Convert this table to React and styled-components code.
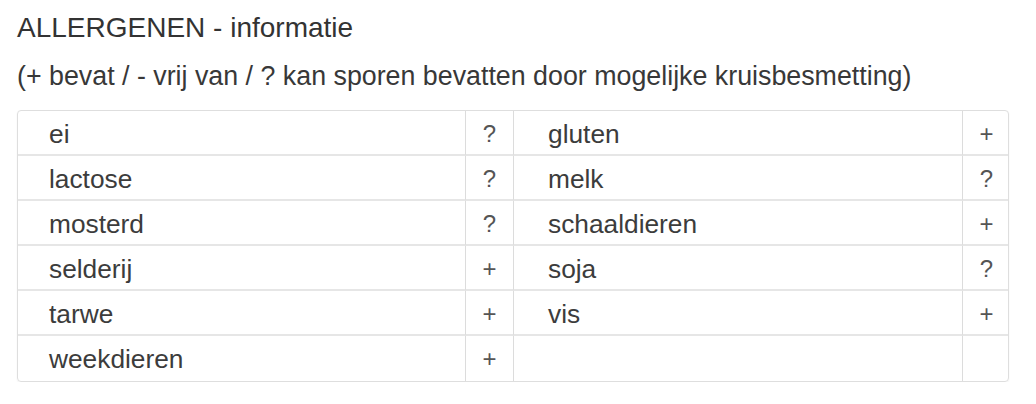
import styled, { createGlobalStyle } from "styled-components";

const GlobalStyle = createGlobalStyle`
  html, body {
    margin: 0;
    padding: 0;
    background: #fff;
  }
  body {
    font-family: "Liberation Sans", Arial, Helvetica, sans-serif;
    color: #333;
  }
`;

// 전체 래퍼
const Page = styled.div`
  width: 1036px;
  padding: 12px 0 0 17px;
  box-sizing: border-box;
`;

const Title = styled.h1`
  margin: 0;
  font-size: 28px;
  line-height: 32px;
  font-weight: normal;
  color: #333;
`;

const Legend = styled.p`
  margin: 17px 0 0 0;
  font-size: 26.8px;
  line-height: 30px;
  color: #383838;
`;

// 알레르겐 표
const Table = styled.div`
  margin-top: 19px;
  width: 992px;
  display: grid;
  grid-template-columns: 448px 48px 449px 47px;
  border: 1px solid #dedede;
  border-radius: 4px;
  box-sizing: border-box;
  overflow: hidden;
  box-shadow: 0 1px 2px rgba(0, 0, 0, 0.05);
`;

const Cell = styled.div`
  height: 45px;
  padding-top: 3px;
  box-sizing: border-box;
  border-bottom: ${(p) => (p.$last ? "none" : "2px solid #e6e6e6")};
  border-right: ${(p) => (p.$end ? "none" : "1px solid #dcdcdc")};
  font-size: 26.3px;
  line-height: 40px;
  color: #3c3c3c;
  white-space: nowrap;
`;

const NameCell = styled(Cell)`
  padding-left: ${(p) => p.$pad}px;
`;

const SignCell = styled(Cell)`
  text-align: center;
  color: #555;
  font-size: 24px;
`;

const rows = [
  ["ei", "?", "gluten", "+"],
  ["lactose", "?", "melk", "?"],
  ["mosterd", "?", "schaaldieren", "+"],
  ["selderij", "+", "soja", "?"],
  ["tarwe", "+", "vis", "+"],
  ["weekdieren", "+", "", ""],
];

function App() {
  return (
    <>
      <GlobalStyle />
      <Page>
        <Title>ALLERGENEN - informatie</Title>
        <Legend>
          (+ bevat / - vrij van / ? kan sporen bevatten door mogelijke kruisbesmetting)
        </Legend>
        <Table>
          {rows.map((row, idx) => {
            const last = idx === rows.length - 1;
            return [
              <NameCell key={idx + "a"} $pad={31} $last={last}>
                {row[0]}
              </NameCell>,
              <SignCell key={idx + "b"} $last={last}>
                {row[1]}
              </SignCell>,
              <NameCell key={idx + "c"} $pad={34} $last={last}>
                {row[2]}
              </NameCell>,
              <SignCell key={idx + "d"} $last={last} $end>
                {row[3]}
              </SignCell>,
            ];
          })}
        </Table>
      </Page>
    </>
  );
}

export default App;
